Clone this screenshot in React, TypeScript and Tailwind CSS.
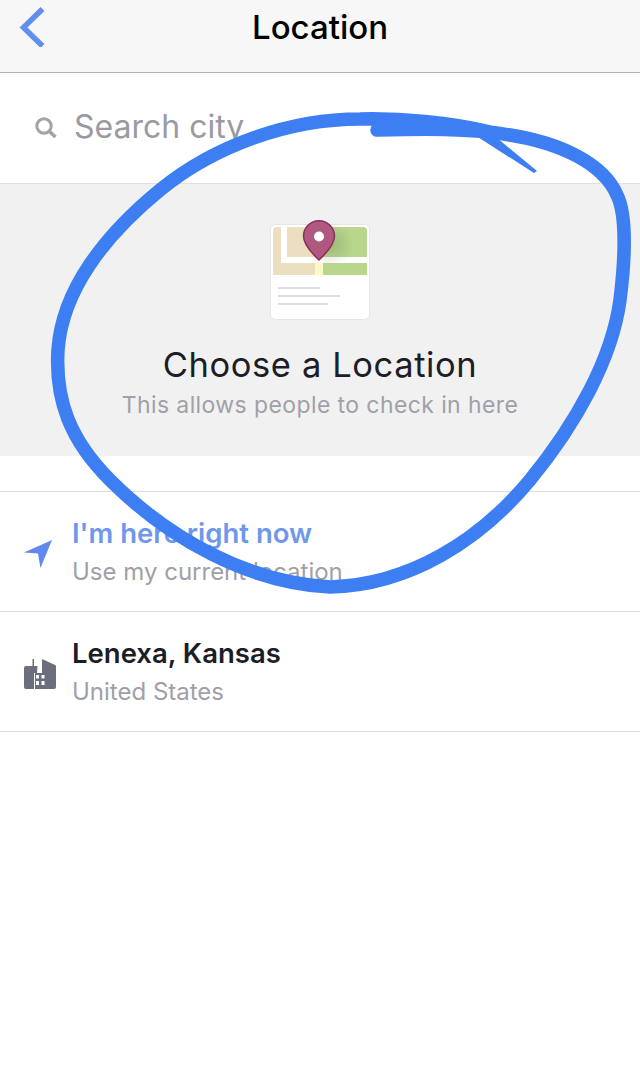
const sans = "font-['Inter','Noto_Sans',sans-serif]"

function MapIcon() {
  return (
    <svg width="104" height="102" viewBox="0 0 104 102" fill="none">
      <defs>
        <radialGradient id="pinShadow">
          <stop offset="0%" stopColor="#6f7d55" stopOpacity="0.35" />
          <stop offset="100%" stopColor="#6f7d55" stopOpacity="0" />
        </radialGradient>
      </defs>
      <rect x="2.500" y="4.500" width="99" height="95" rx="5" fill="#fff" stroke="#e6e6e6" />
      <path d="M5 11a4 4 0 0 1 4-4h4v36h-8z" fill="#ecdfc0" />
      <rect x="19" y="7" width="30" height="30" fill="#ecdfc0" />
      <rect x="5" y="43" width="42" height="12" fill="#ecdfc0" />
      <rect x="47" y="43" width="8" height="12" fill="#fdf8c4" />
      <path d="M49 7h46a4 4 0 0 1 4 4v26h-50z" fill="#b8d78c" />
      <rect x="55" y="43" width="44" height="12" fill="#b8d78c" />
      <rect x="10" y="67" width="42" height="2" fill="#dedee0" />
      <rect x="10" y="75" width="62" height="2" fill="#dedee0" />
      <rect x="10" y="83" width="50" height="2" fill="#dedee0" />
      <ellipse cx="62" cy="24" rx="24" ry="22" fill="url(#pinShadow)" />
      <path d="M51 0.800c8.600 0 15.500 6.900 15.500 15.500 0 8.500-8 16.700-15.500 23.700-7.500-7-15.500-15.200-15.500-23.700 0-8.600 6.900-15.500 15.500-15.500z" fill="#b0587f" stroke="#8a2f5b" strokeWidth="1.500" />
      <circle cx="51" cy="16.500" r="5" fill="#fff" />
    </svg>
  )
}

function Row({ icon, title, sub, titleClass }: { icon: React.ReactNode; title: string; sub: string; titleClass: string }) {
  return (
    <div className="flex h-[120px] items-center border-b border-[#dcdcdc]">
      <div className="flex w-[72px] justify-start pt-1 pl-6">{icon}</div>
      <div>
        <p className={`text-[27.500px] leading-[40px] font-semibold ${titleClass}`}>{title}</p>
        <p className="text-[24px] leading-[38px] text-[#a0a0a8]">{sub}</p>
      </div>
    </div>
  )
}

export default function App() {
  return (
    <div className={`relative h-[1072px] w-[640px] overflow-hidden bg-white ${sans}`}>
      <div className="relative flex h-[73px] items-center justify-center border-b border-[#b4b4b4] bg-[#f7f7f7]">
        <svg className="absolute top-[7px] left-[19px]" width="26" height="40" viewBox="0 0 26 40" fill="none">
          <path d="M23.500 2 4.500 20.500l19 18.500" stroke="#618fee" strokeWidth="5.500" />
        </svg>
        <h1 className="-mt-[16px] text-[33px] font-medium text-black">Location</h1>
      </div>

      <div className="flex h-[111px] items-center gap-[17px] border-b border-[#e0e0e0] pl-[35px]">
        <svg className="-mt-[2px]" width="22" height="21" viewBox="0 0 22 21" fill="none">
          <circle cx="9" cy="9" r="7.200" stroke="#a3a3a8" strokeWidth="3" />
          <path d="m14 14 6.500 6" stroke="#a3a3a8" strokeWidth="3.500" />
        </svg>
        <span className="-mt-[2px] text-[32px] text-[#9a9aa3]">Search city</span>
      </div>

      <div className="flex h-[272px] flex-col items-center bg-[#f1f1f2] pt-9">
        <MapIcon />
        <p className="mt-[20px] text-[34.500px] leading-[46px] tracking-[0.6px] text-[#1d1d26]">Choose a Location</p>
        <p className="text-[23px] leading-[34px] tracking-[0.4px] text-[#a0a0a8]">This allows people to check in here</p>
      </div>

      <div className="mt-[35px] border-t border-[#dcdcdc]">
        <Row
          title="I'm here right now"
          sub="Use my current location"
          titleClass="text-[#6f97ec]"
          icon={
            <svg width="28" height="28" viewBox="0 0 28 28">
              <path d="M0 12.500 28 0 16.500 28l-2.500-14.500z" fill="#6287ee" />
            </svg>
          }
        />
        <Row
          title="Lenexa, Kansas"
          sub="United States"
          titleClass="text-[#1d1d26]"
          icon={
            <svg width="32" height="30" viewBox="0 0 32 30" fill="#6b6e7c">
              <path d="M0 9a2 2 0 0 1 2-2h6.500V0h1.500v7h3.500l-.5 7H10v16H2a2 2 0 0 1-2-2z" />
              <path d="M18 0l12 5.500a2 2 0 0 1 2 2V28a2 2 0 0 1-2 2h-8V14h-4z" />
              <path d="M11 14h11v16H11z" />
              <path d="M12 16h3v3.500h-3zM17.500 16h3v3.500h-3zM12 22h3v4h-3zM17.500 22h3v4h-3z" fill="#fff" />
            </svg>
          }
        />
      </div>

      <svg className="absolute inset-0" width="640" height="1072" viewBox="0 0 640 1072" fill="none">
        <path
          d="M377 130C420 129 470 128 510 135C560 143 603 163 617 195C627 215 625 260 620 300C612 360 575 425 530 480C480 540 410 585 330 587C250 583 170 540 110 480C70 440 55 400 58 350C62 290 105 235 160 190C215 145 290 119 360 119C400 118 450 122 490 132"
          stroke="#3d7ff2"
          strokeWidth="13.500"
          strokeLinecap="round"
          strokeLinejoin="round"
        />
        <path d="M480 124 537 171 534 173 470 132z" fill="#3d7ff2" />
      </svg>
    </div>
  )
}
